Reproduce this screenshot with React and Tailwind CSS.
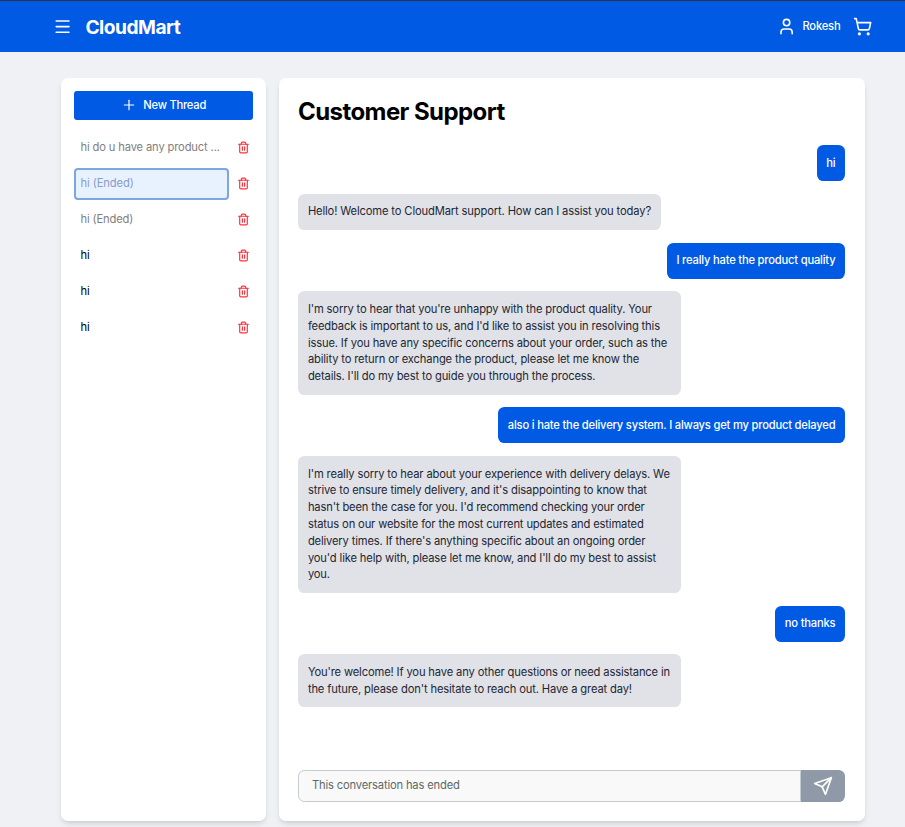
import { Menu, User, ShoppingCart, Plus, Trash2 } from "lucide-react";

const threads = [
  { text: "hi do u have any product ...", ended: true },
  { text: "hi (Ended)", ended: true, active: true },
  { text: "hi (Ended)", ended: true },
  { text: "hi" },
  { text: "hi" },
  { text: "hi" },
];

const messages = [
  { me: true, lines: ["hi"] },
  { lines: ["Hello! Welcome to CloudMart support. How can I assist you today?"] },
  { me: true, lines: ["I really hate the product quality"] },
  {
    lines: [
      "I'm sorry to hear that you're unhappy with the product quality. Your",
      "feedback is important to us, and I'd like to assist you in resolving this",
      "issue. If you have any specific concerns about your order, such as the",
      "ability to return or exchange the product, please let me know the",
      "details. I'll do my best to guide you through the process.",
    ],
  },
  { me: true, lines: ["also i hate the delivery system. I always get my product delayed"] },
  {
    lines: [
      "I'm really sorry to hear about your experience with delivery delays. We",
      "strive to ensure timely delivery, and it's disappointing to know that",
      "hasn't been the case for you. I'd recommend checking your order",
      "status on our website for the most current updates and estimated",
      "delivery times. If there's anything specific about an ongoing order",
      "you'd like help with, please let me know, and I'll do my best to assist",
      "you.",
    ],
  },
  { me: true, lines: ["no thanks"] },
  {
    lines: [
      "You're welcome! If you have any other questions or need assistance in",
      "the future, please don't hesitate to reach out. Have a great day!",
    ],
  },
];

function SendIcon() {
  return (
    <svg
      viewBox="0 0 24 24"
      className="size-[20px]"
      fill="none"
      stroke="currentColor"
      strokeWidth="2"
      strokeLinecap="round"
      strokeLinejoin="round"
    >
      <path d="m22 2-7 20-4-9-9-4Z" />
      <path d="M22 2 11 13" />
    </svg>
  );
}

function Header() {
  return (
    <header className="flex h-[52px] items-center justify-between border-t border-[#2b3446] bg-[#005ae4] pl-[52.6px] pr-[32.6px] text-white">
      <div className="flex items-center">
        <Menu className="size-[19.2px]" strokeWidth={2} />
        <h1 className="ml-[13.6px] text-[19.2px] font-bold leading-7 tracking-[-0.5px]">CloudMart</h1>
      </div>
      <div className="flex items-center">
        <User className="size-[19.2px]" strokeWidth={2} />
        <span className="ml-[6.4px] text-[11.2px] font-medium tracking-[-0.2px]">Rokesh</span>
        <ShoppingCart className="ml-[12.8px] size-[19.2px]" strokeWidth={2} />
      </div>
    </header>
  );
}

function Sidebar() {
  return (
    <aside className="h-[743px] w-[205px] shrink-0 rounded-[7px] bg-white px-[13px] pt-[13px] shadow-md">
      <button className="flex h-[29px] w-full items-center justify-center gap-[6.4px] rounded-[3px] bg-[#005ae4] text-[11.2px] font-medium tracking-[-0.25px] text-white">
        <Plus className="mb-px size-4" strokeWidth={1.8} />
        New Thread
      </button>
      <ul className="mt-3 flex flex-col gap-1">
        {threads.map((t, i) => (
          <li key={i} className="flex h-8 items-center justify-between tracking-[-0.15px]">
            <div
              className={
                t.active
                  ? "flex h-8 w-[155px] items-center rounded-[4px] border-2 border-[#7ba7df] bg-[#e8f2fe] pb-px pl-[4.5px] text-[11.2px] tracking-[-0.1px] text-[#8b9bcd]"
                  : t.ended
                    ? "flex h-8 w-[155px] items-center whitespace-nowrap pb-px pl-[6.5px] text-[11.2px] text-[#808080]"
                    : "flex h-8 w-[155px] items-center pb-px pl-[6.5px] text-[11.2px] text-black"
              }
            >
              {t.text}
            </div>
            <Trash2 className="mb-[2px] mr-[3px] size-[13px] text-[#fb3640]" strokeWidth={2.2} />
          </li>
        ))}
      </ul>
    </aside>
  );
}

function Bubble({ me, lines }) {
  return (
    <div
      className={
        me
          ? "self-end rounded-[6.4px] bg-[#005ae4] p-[9.6px] text-[11.2px] font-medium leading-[16.8px] tracking-[-0.2px] text-white"
          : lines.length > 1
            ? "w-[383px] self-start rounded-[6.4px] bg-[#e1e2e8] py-[9.6px] pl-[9.9px] text-[11.2px] leading-[16.8px] tracking-[-0.15px] text-[#1c2733]"
            : "self-start rounded-[6.4px] bg-[#e1e2e8] py-[9.6px] pl-[9.9px] pr-[9.6px] text-[11.2px] leading-[16.8px] tracking-[-0.14px] text-[#1c2733]"
      }
    >
      {lines.map((l) => (
        <span key={l} className="block whitespace-nowrap">{l}</span>
      ))}
    </div>
  );
}

function Chat() {
  return (
    <main className="flex h-[743px] w-[586px] shrink-0 flex-col rounded-[7px] bg-white pb-[19px] pl-[19px] pr-5 pt-[19px] shadow-md">
      <h2 className="text-2xl font-bold leading-[29px] tracking-[-0.57px] text-black">Customer Support</h2>
      <div className="mt-[19px] flex flex-1 flex-col gap-[12.8px]">
        {messages.map((m, i) => (
          <Bubble key={i} {...m} />
        ))}
      </div>
      <div className="flex h-8 w-[547px]">
        <div className="flex flex-1 items-center rounded-l-[6.4px] border border-[#c5cbd3] bg-[#f9f9f9] px-[13px] pb-[2px] text-[11.2px] tracking-[-0.17px] text-[#5b6a66]">
          This conversation has ended
        </div>
        <button className="flex w-11 items-center justify-center rounded-r-[6.4px] bg-[#9099a7] pb-px text-white">
          <SendIcon />
        </button>
      </div>
    </main>
  );
}

export default function App() {
  return (
    <div className="h-[827px] w-[905px] overflow-hidden bg-[#f0f1f4] font-['Inter',sans-serif]">
      <Header />
      <div className="flex gap-[13px] pl-[61px] pt-[26px]">
        <Sidebar />
        <Chat />
      </div>
    </div>
  );
}
